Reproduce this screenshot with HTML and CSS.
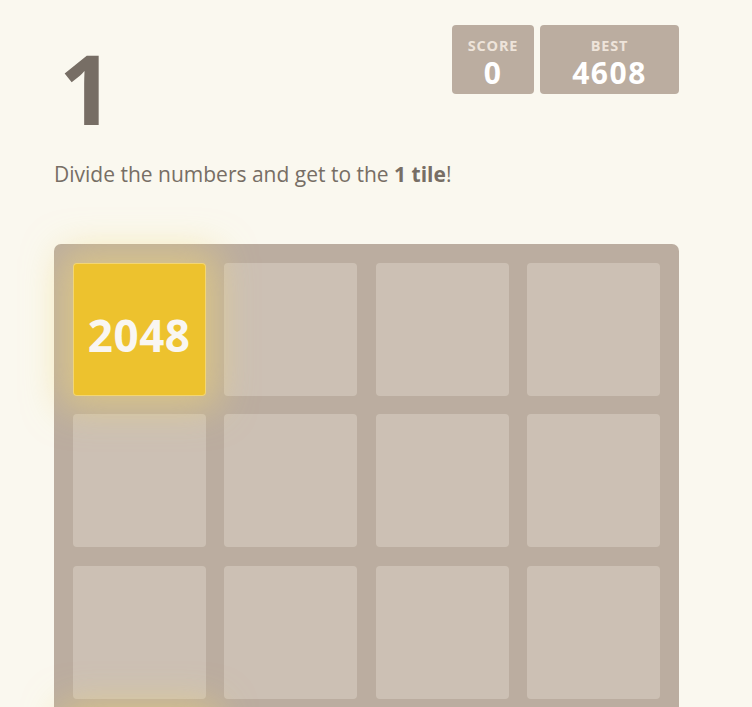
FILE: index.html
```
<!DOCTYPE html>
<html>
<head>
<meta charset="utf-8">
<link rel="stylesheet" href="styles.css">
</head>
<body>
<div class="container">
  <div class="heading">
    <h1 class="title">1</h1>
    <div class="scores">
      <div class="score-box score"><span class="label">SCORE</span><span class="value">0</span></div>
      <div class="score-box best"><span class="label">BEST</span><span class="value">4608</span></div>
    </div>
  </div>
  <p class="intro">Divide the numbers and get to the <strong>1 tile</strong>!</p>
  <div class="board">
    <div class="cell tile tile-2048">2048</div>
    <div class="cell"></div>
    <div class="cell"></div>
    <div class="cell"></div>
    <div class="cell"></div>
    <div class="cell"></div>
    <div class="cell"></div>
    <div class="cell"></div>
    <div class="cell"></div>
    <div class="cell"></div>
    <div class="cell"></div>
    <div class="cell"></div>
    <div class="cell tile tile-2048">2048</div>
    <div class="cell"></div>
    <div class="cell"></div>
    <div class="cell"></div>
  </div>
</div>
</body>
</html>
```
FILE: styles.css
```
html, body {
  margin: 0;
  padding: 0;
}
body {
  background: #faf8ef;
  color: #776e65;
  font-family: "Open Sans", "DejaVu Sans", sans-serif;
}
.container {
  width: 625px;
  margin-left: 54px;
  padding-top: 15px;
}
.heading {
  display: flex;
  justify-content: space-between;
  align-items: flex-start;
}
.title {
  margin: 25px 0 0 0;
  font-size: 96px;
  line-height: 96px;
  font-weight: bold;
  color: #776e65;
  padding-left: 5px;
}
.scores {
  display: flex;
  gap: 6px;
  margin-top: 10px;
}
.score-box {
  background: #bbada0;
  border-radius: 4px;
  height: 69px;
  box-sizing: border-box;
  padding-top: 13px;
  display: flex;
  flex-direction: column;
  align-items: center;
  font-weight: bold;
}
.score { width: 82px; }
.best { width: 139px; }
.label {
  font-size: 14.5px;
  line-height: 16px;
  letter-spacing: 0.8px;
  color: #eee4da;
}
.value {
  margin-top: 3px;
  font-size: 30px;
  line-height: 31px;
  letter-spacing: 1.5px;
  color: #ffffff;
}
.intro {
  margin: 23px 0 0 0;
  font-size: 21px;
  line-height: 30px;
}
.intro strong {
  font-weight: bold;
}
.board {
  margin-top: 55px;
  background: #bbada0;
  border-radius: 7px;
  padding: 18.75px;
  display: grid;
  grid-template-columns: repeat(4, 1fr);
  grid-auto-rows: 132.8px;
  gap: 18.75px;
}
.cell {
  background: rgba(238, 228, 218, 0.35);
  border-radius: 4px;
}
.tile {
  position: relative;
  z-index: 1;
  display: flex;
  align-items: center;
  justify-content: center;
  font-weight: bold;
}
.tile-2048 {
  background: #edc22e;
  color: #f9f6f2;
  font-size: 44px;
  letter-spacing: 0.5px;
  padding-top: 12px;
  box-sizing: border-box;
  box-shadow: 0 0 37px 12px rgba(243, 215, 116, 0.55556), inset 0 0 0 1px rgba(255, 255, 255, 0.33333);
}
```
